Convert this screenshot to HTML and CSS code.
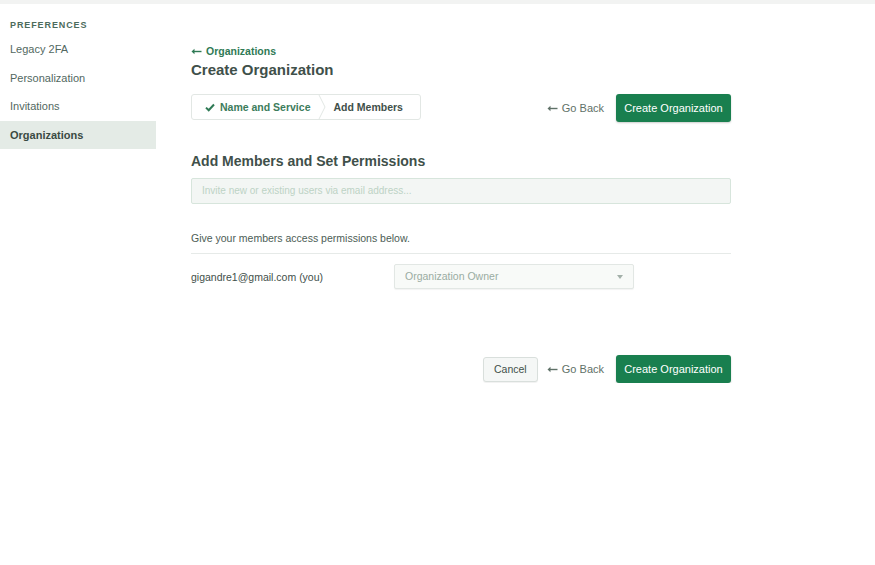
FILE: index.html
```html
<!DOCTYPE html>
<html>
<head>
<meta charset="utf-8">
<link rel="stylesheet" href="styles.css">
</head>
<body>
<div class="topbar"></div>
<div class="layout">
  <aside class="sidebar">
    <div class="side-title">PREFERENCES</div>
    <a class="side-item">Legacy 2FA</a>
    <a class="side-item">Personalization</a>
    <a class="side-item">Invitations</a>
    <a class="side-item active">Organizations</a>
  </aside>
  <main class="main">
    <a class="back-link"><svg class="arrow" width="11" height="7" viewBox="0 0 11 7"><path d="M0.5 3.5 L3.5 0.8 L3.5 6.2 Z" fill="currentColor"/><path d="M3 3.5 H10.5" stroke="currentColor" stroke-width="1.4"/></svg>Organizations</a>
    <h1 class="title">Create Organization</h1>
    <div class="toolbar">
      <div class="steps">
        <div class="step done"><svg class="check" width="10" height="9" viewBox="0 0 10 9"><path d="M1 4.6 L3.7 7.2 L9 1.5" fill="none" stroke="#2f7a55" stroke-width="2"/></svg>Name and Service</div>
        <div class="step-sep"><svg width="8" height="26" viewBox="0 0 8 26"><path d="M0.5 0 L7 13 L0.5 26" fill="none" stroke="#e2e7e4" stroke-width="1"/></svg></div>
        <div class="step current">Add Members</div>
      </div>
      <div class="actions">
        <a class="go-back"><svg class="arrow" width="11" height="7" viewBox="0 0 11 7"><path d="M0.5 3.5 L3.5 0.8 L3.5 6.2 Z" fill="currentColor"/><path d="M3 3.5 H10.5" stroke="currentColor" stroke-width="1.4"/></svg>Go Back</a>
        <button class="btn-primary">Create Organization</button>
      </div>
    </div>
    <h2 class="section-title">Add Members and Set Permissions</h2>
    <div class="invite">Invite new or existing users via email address...</div>
    <p class="hint">Give your members access permissions below.</p>
    <div class="member-row">
      <div class="email">gigandre1@gmail.com (you)</div>
      <div class="select">Organization Owner<span class="caret"></span></div>
    </div>
    <div class="footer-actions">
      <button class="btn-secondary">Cancel</button>
      <a class="go-back"><svg class="arrow" width="11" height="7" viewBox="0 0 11 7"><path d="M0.5 3.5 L3.5 0.8 L3.5 6.2 Z" fill="currentColor"/><path d="M3 3.5 H10.5" stroke="currentColor" stroke-width="1.4"/></svg>Go Back</a>
      <button class="btn-primary">Create Organization</button>
    </div>
  </main>
</div>
</body>
</html>
```

FILE: styles.css
```css
html, body {
  margin: 0;
  padding: 0;
  background: #ffffff;
  font-family: "Liberation Sans", Arial, sans-serif;
  color: #3d4f48;
}
.topbar {
  height: 4px;
  background: #f2f3f2;
}
.layout {
  display: flex;
}
.sidebar {
  width: 156px;
  padding-top: 14px;
  display: flex;
  flex-direction: column;
}
.side-title {
  font-size: 9px;
  font-weight: bold;
  letter-spacing: 0.9px;
  color: #4c6b5c;
  padding: 0 10px;
  height: 14px;
  line-height: 14px;
  margin-bottom: 3px;
}
.side-item {
  display: block;
  font-size: 11px;
  color: #52685f;
  padding: 0 10px;
  height: 28.6px;
  line-height: 28px;
}
.side-item.active {
  background: #e4ebe6;
  color: #3a4a43;
  font-weight: bold;
}
.main {
  margin-left: 35px;
  width: 540px;
  padding-top: 39px;
  display: flex;
  flex-direction: column;
}
.back-link {
  display: flex;
  align-items: center;
  font-size: 10.5px;
  font-weight: bold;
  color: #2f7a55;
  height: 16px;
  line-height: 16px;
}
.arrow {
  margin-right: 4px;
  flex: none;
}
.title {
  margin: 0;
  font-size: 15px;
  font-weight: bold;
  color: #3f504a;
  height: 22px;
  line-height: 22px;
}
.toolbar {
  margin-top: 13px;
  display: flex;
  justify-content: space-between;
  align-items: center;
}
.steps {
  display: flex;
  align-items: stretch;
  height: 26px;
  border: 1px solid #e2e7e4;
  border-radius: 3px;
  box-sizing: border-box;
  width: 230px;
  margin-top: -2px;
}
.step {
  display: flex;
  align-items: center;
  font-size: 10.5px;
  font-weight: bold;
  line-height: 24px;
}
.step.done {
  color: #3c7c5c;
  padding-left: 13px;
  padding-right: 8px;
}
.check {
  margin-right: 5px;
}
.step-sep {
  display: flex;
  align-items: center;
  margin-top: -1px;
}
.step.current {
  color: #3f504a;
  padding-left: 7px;
}
.actions {
  display: flex;
  align-items: center;
}
.go-back {
  display: flex;
  align-items: center;
  font-size: 11px;
  color: #5f7168;
  margin-right: 12px;
}
.btn-primary {
  font-family: "Liberation Sans", Arial, sans-serif;
  background: #197f4f;
  color: #ffffff;
  border: none;
  border-radius: 3px;
  font-size: 11px;
  height: 28px;
  width: 115px;
  padding: 0;
  box-shadow: 0 1px 2px rgba(0,0,0,0.2);
}
.section-title {
  margin: 29px 0 0 0;
  font-size: 14px;
  font-weight: bold;
  color: #3f504a;
  height: 20px;
  line-height: 20px;
}
.invite {
  margin-top: 7px;
  height: 26px;
  box-sizing: border-box;
  border: 1px solid #d7e5dc;
  border-radius: 2px;
  background: #f3f6f4;
  font-size: 10px;
  color: #bdd3c5;
  padding-left: 10px;
  line-height: 24px;
}
.hint {
  margin: 26px 0 0 0;
  font-size: 10.5px;
  color: #4c5d55;
  height: 16px;
  line-height: 16px;
  padding-bottom: 7px;
  border-bottom: 1px solid #e6eae8;
}
.member-row {
  margin-top: 10px;
  display: flex;
  align-items: center;
}
.email {
  width: 203px;
  font-size: 10.5px;
  color: #3f504a;
}
.select {
  position: relative;
  width: 240px;
  height: 25px;
  box-sizing: border-box;
  border: 1px solid #e2e7e4;
  border-radius: 2px;
  background: #f8faf8;
  font-size: 10.5px;
  color: #9aaca2;
  line-height: 23px;
  padding-left: 10px;
  box-shadow: 0 1px 1px rgba(0,0,0,0.05);
}
.caret {
  position: absolute;
  right: 10px;
  top: 10px;
  width: 0;
  height: 0;
  border-left: 3.5px solid transparent;
  border-right: 3.5px solid transparent;
  border-top: 4px solid #a3b0a9;
}
.footer-actions {
  margin-top: 66px;
  display: flex;
  justify-content: flex-end;
  align-items: center;
}
.btn-secondary {
  font-family: "Liberation Sans", Arial, sans-serif;
  background: #f5f7f6;
  color: #3f504a;
  border: 1px solid #d9dfdc;
  border-radius: 3px;
  font-size: 10.5px;
  height: 25px;
  width: 55px;
  padding: 0;
  margin-right: 9px;
  box-shadow: 0 1px 1px rgba(0,0,0,0.06);
}
```
